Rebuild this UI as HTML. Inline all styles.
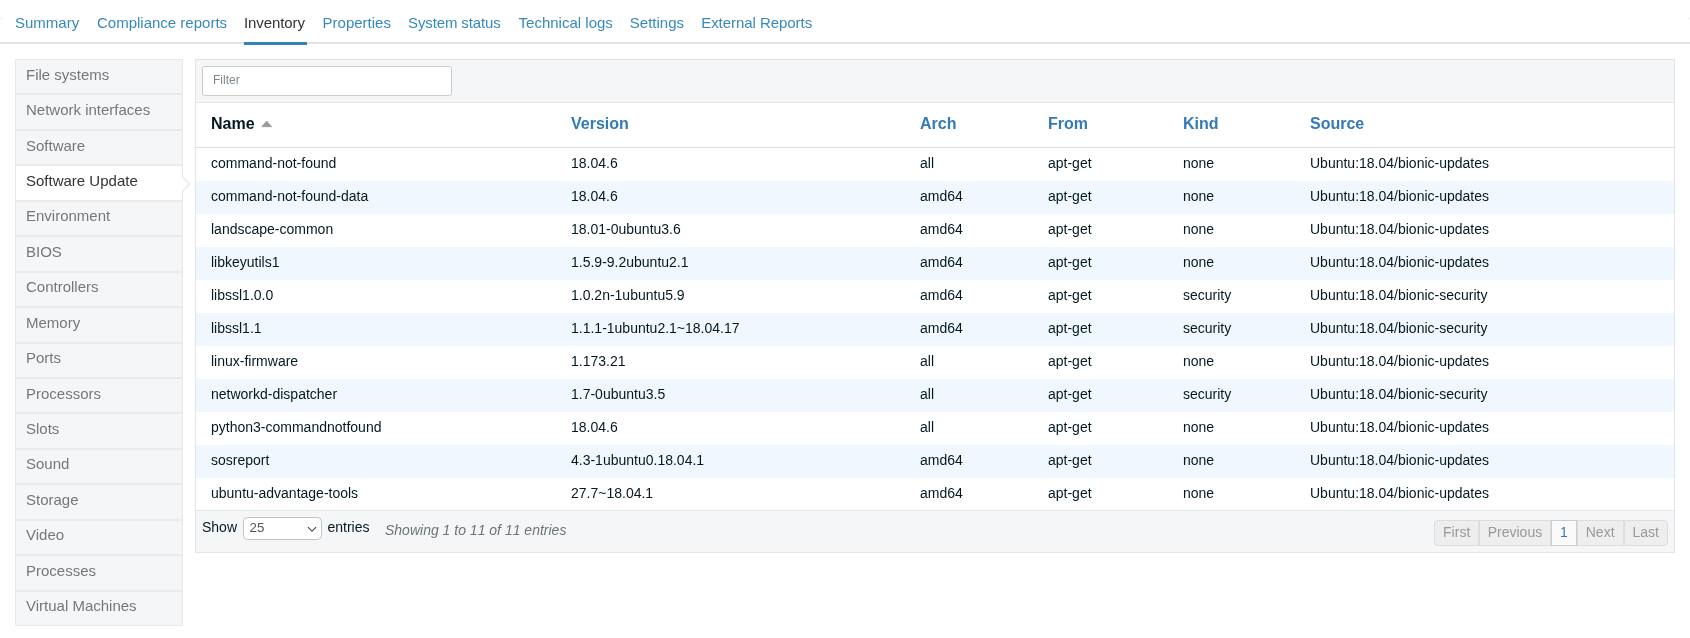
<!DOCTYPE html>
<html lang="en">
<head>
<meta charset="utf-8">
<title>Node details - Inventory</title>
<style>
*{box-sizing:border-box}
html,body{margin:0;padding:0;background:#fff}
body{width:1690px;height:638px;overflow:hidden;position:relative;will-change:transform;font-family:"Liberation Sans",Arial,sans-serif;font-size:14px;color:#041922}
ul{list-style:none;margin:0;padding:0}
/* top tabs */
.tabs{position:absolute;left:0;top:0;width:1690px;height:44px;border-bottom:2px solid #e3e3e3}
.tabs ul{position:absolute;left:0;top:0;height:45px;white-space:nowrap}
.tabs li{position:absolute;top:0;height:45px;line-height:45px;font-size:15px;color:#3689bd}
.tabs li.on{color:#333}
.tabs li.on:after{content:"";position:absolute;left:0;width:63px;bottom:0;height:3px;background:#3085b8}
/* side */
.side{position:absolute;left:15px;top:59px;width:168px;border:1px solid #e8e8e8;border-bottom:1px solid #e8e8e8;background:#f5f6f7}
.side li{height:35.45px;line-height:30px;padding-left:10px;font-size:15px;color:#777;border-bottom:2px solid #ebebeb;position:relative}
.side li.u{line-height:28px}
.side li:last-child{border-bottom:0;height:33.45px}
.side li.on{background:#fff;color:#333}
.side li.on svg{position:absolute;left:166px;top:10.5px}
/* main */
.main{position:absolute;left:195px;top:59px;width:1480px;height:494px;border:1px solid #e4e5e6;background:#fff}
.fbar{height:43px;background:#f5f6f7;border-bottom:1px solid #e4e5e6;position:relative}
.fbar .inp{position:absolute;left:6px;top:6px;width:250px;height:30px;border:1px solid #ccc;border-radius:2.5px;background:#fff;font-size:12px;color:#7b878e;line-height:27px;padding-left:10px}
table{border-collapse:separate;border-spacing:0;width:1478px;table-layout:fixed}
th{height:45px;text-align:left;font-size:16px;font-weight:bold;color:#337ab7;padding:0 0 3px 15px;border-bottom:1px solid #e0e0e0}
th.s{color:#041922}
td{height:33px;padding:0 0 4px 15px;font-size:14px;color:#041922;white-space:nowrap}
tr.e td{background:#f0f7fe}
.foot{position:absolute;left:0;right:0;top:450px;height:42px;background:#f5f6f7;border-top:1px solid #e4e5e6}
.foot .show{position:absolute;left:6px;top:0;line-height:33px;font-size:14px;color:#041922}
.foot .sel{position:absolute;left:47px;top:6px;width:79px;height:23px;border:1px solid #c4c4c4;border-radius:4.5px;background:#fff;font-size:13.33px;color:#555;line-height:19px;padding-left:5.5px}
.foot .ent{position:absolute;left:131.5px;top:0;line-height:33px;font-size:14px;color:#041922}
.foot .info{position:absolute;left:189px;top:0;line-height:38px;font-size:14px;font-style:italic;color:#6a747a}
.pg{position:absolute;right:6px;top:9px;height:26px;display:flex}
.pg span{display:block;height:26px;line-height:22px;padding:0 8px;font-size:14px;color:#999;border:1px solid #ddd;background:#eee}
.pg span:first-child{border-radius:4px 0 0 4px;padding:0 7.7px}
.pg span:nth-child(2){padding:0 7.75px}
.pg span:last-child{border-radius:0 4px 4px 0}
.pg span.c{background:#f9f9f9;color:#337ab7;border-color:#ccc}
</style>
</head>
<body>
<div class="tabs"><ul>
<li style="left:15px">Summary</li><li style="left:97px">Compliance reports</li><li class="on" style="left:244px;letter-spacing:-0.1px">Inventory</li><li style="left:322.6px">Properties</li><li style="left:408px;letter-spacing:-0.12px">System status</li><li style="left:518.6px">Technical logs</li><li style="left:629.8px">Settings</li><li style="left:701.2px;letter-spacing:-0.05px">External Reports</li>
</ul>
<svg style="position:absolute;left:0;top:16px" width="4" height="6" viewBox="0 0 4 6"><path d="M0 1 L3.5 1 L0 4.5 Z" fill="#f3f5f9"/></svg>
<svg style="position:absolute;left:1686px;top:16px" width="4" height="6" viewBox="0 0 4 6"><path d="M4 1 L0.5 1 L4 4.5 Z" fill="#f4f5fa"/></svg>
</div>

<ul class="side">
<li>File systems</li><li>Network interfaces</li><li>Software</li><li class="on">Software Update<svg width="10" height="15" viewBox="0 0 10 15"><path d="M0 0.2 L0.5 0.2 L7.6 7.25 L0.5 14.3 L0 14.3 Z" fill="#fff"/><path d="M0.5 0.2 L7.6 7.25 L0.5 14.3" fill="none" stroke="#e4e4e4" stroke-width="1.1"/></svg></li><li class="u">Environment</li><li>BIOS</li><li class="u">Controllers</li><li>Memory</li><li class="u">Ports</li><li>Processors</li><li>Slots</li><li class="u">Sound</li><li>Storage</li><li class="u">Video</li><li>Processes</li><li class="u">Virtual Machines</li>
</ul>

<div class="main">
<div class="fbar"><div class="inp">Filter</div></div>
<table>
<colgroup><col style="width:360px"><col style="width:349px"><col style="width:128px"><col style="width:135px"><col style="width:127px"><col></colgroup>
<thead><tr><th class="s">Name</th><th>Version</th><th>Arch</th><th>From</th><th>Kind</th><th>Source</th></tr></thead>
<tbody>
<tr><td>command-not-found</td><td>18.04.6</td><td>all</td><td>apt-get</td><td>none</td><td>Ubuntu:18.04/bionic-updates</td></tr>
<tr class="e"><td>command-not-found-data</td><td>18.04.6</td><td>amd64</td><td>apt-get</td><td>none</td><td>Ubuntu:18.04/bionic-updates</td></tr>
<tr><td>landscape-common</td><td>18.01-0ubuntu3.6</td><td>amd64</td><td>apt-get</td><td>none</td><td>Ubuntu:18.04/bionic-updates</td></tr>
<tr class="e"><td>libkeyutils1</td><td>1.5.9-9.2ubuntu2.1</td><td>amd64</td><td>apt-get</td><td>none</td><td>Ubuntu:18.04/bionic-updates</td></tr>
<tr><td>libssl1.0.0</td><td>1.0.2n-1ubuntu5.9</td><td>amd64</td><td>apt-get</td><td>security</td><td>Ubuntu:18.04/bionic-security</td></tr>
<tr class="e"><td>libssl1.1</td><td>1.1.1-1ubuntu2.1~18.04.17</td><td>amd64</td><td>apt-get</td><td>security</td><td>Ubuntu:18.04/bionic-security</td></tr>
<tr><td>linux-firmware</td><td>1.173.21</td><td>all</td><td>apt-get</td><td>none</td><td>Ubuntu:18.04/bionic-updates</td></tr>
<tr class="e"><td>networkd-dispatcher</td><td>1.7-0ubuntu3.5</td><td>all</td><td>apt-get</td><td>security</td><td>Ubuntu:18.04/bionic-security</td></tr>
<tr><td>python3-commandnotfound</td><td>18.04.6</td><td>all</td><td>apt-get</td><td>none</td><td>Ubuntu:18.04/bionic-updates</td></tr>
<tr class="e"><td>sosreport</td><td>4.3-1ubuntu0.18.04.1</td><td>amd64</td><td>apt-get</td><td>none</td><td>Ubuntu:18.04/bionic-updates</td></tr>
<tr><td>ubuntu-advantage-tools</td><td>27.7~18.04.1</td><td>amd64</td><td>apt-get</td><td>none</td><td>Ubuntu:18.04/bionic-updates</td></tr>
</tbody>
</table>
<svg style="position:absolute;left:65px;top:60px" width="12" height="8" viewBox="0 0 12 8"><path d="M0.7 6.7 L5.7 1.1 L10.7 6.7 Z" fill="#999" stroke="#999" stroke-width="0.7" stroke-linejoin="round"/></svg>
<div class="foot">
<span class="show">Show</span>
<div class="sel">25<svg style="position:absolute;left:63px;top:7.6px" width="10" height="7" viewBox="0 0 10 7"><path d="M1 1.2 L5 5.3 L9 1.2" fill="none" stroke="#444" stroke-width="1.15"/></svg></div>
<span class="ent">entries</span>
<span class="info">Showing 1 to <i style="font-kerning:none">11</i> of <i style="font-kerning:none">11</i> entries</span>
<div class="pg"><span>First</span><span>Previous</span><span class="c">1</span><span>Next</span><span>Last</span></div>
</div>
</div>
</body>
</html>
